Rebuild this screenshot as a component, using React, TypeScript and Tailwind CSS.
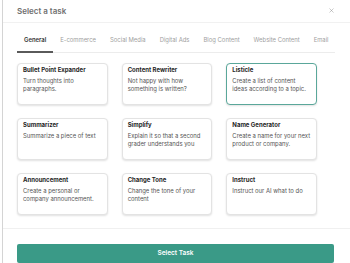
import { X } from 'lucide-react'

interface Task {
  title: string
  description: string
}

const tabs = [
  'General',
  'E-commerce',
  'Social Media',
  'Digital Ads',
  'Blog Content',
  'Website Content',
  'Email',
]

// descriptions keep the line breaks the cards show
const tasks: Task[] = [
  { title: 'Bullet Point Expander', description: 'Turn thoughts into\nparagraphs.' },
  { title: 'Content Rewriter', description: 'Not happy with how\nsomething is written?' },
  { title: 'Listicle', description: 'Create a list of content\nideas according to a topic.' },
  { title: 'Summarizer', description: 'Summarize a piece of text' },
  { title: 'Simplify', description: 'Explain it so that a second\ngrader understands you' },
  { title: 'Name Generator', description: 'Create a name for your next\nproduct or company.' },
  { title: 'Announcement', description: 'Create a personal or\ncompany announcement.' },
  { title: 'Change Tone', description: 'Change the tone of your\ncontent' },
  { title: 'Instruct', description: 'Instruct our AI what to do' },
]

const TaskCard = ({ task, active }: { task: Task; active?: boolean }) => (
  <div
    className={`h-[42px] rounded-[4px] border bg-white px-[5px] pt-[2.5px] shadow-[0_1px_2px_rgba(0,0,0,0.12)] ${
      active ? 'border-[#5aa79a]' : 'border-[#e3e3e3]'
    }`}
  >
    <p className="text-[6px] font-bold leading-[8px] text-[#1f1f1f]">{task.title}</p>
    <p className="mt-[2.5px] whitespace-pre-line text-[5.9px] leading-[8px] text-[#555]">
      {task.description}
    </p>
  </div>
)

export default function App() {
  return (
    <div
      className="h-[263px] w-[350px] overflow-hidden bg-white"
      style={{ fontFamily: 'Inter, "Liberation Sans", sans-serif' }}
    >
      <div className="ml-[2px] flex h-full flex-col border-l border-[#d4d4d4]">
        {/* Header */}
        <div className="flex h-[25px] items-center justify-between border-b border-[#f1f1f1] pl-[14px] pr-[15px]">
          <h2 className="text-[8px] font-semibold text-[#6f6f6f]">Select a task</h2>
          <X size={7} strokeWidth={1.5} className="text-[#888]" />
        </div>

        {/* Tabs */}
        <div className="ml-[14px] mr-[15px] mt-[9px] flex border-b border-[#ececec]">
          {tabs.map((tab, i) => (
            <div
              key={tab}
              className={`-mb-px whitespace-nowrap px-[7px] pb-[7px] pt-[4px] text-[5.9px] leading-[8px] ${
                i === 0
                  ? 'border-b-[2px] border-[#5a5a5a] font-semibold text-[#333]'
                  : 'border-b-[2px] border-transparent text-[#a0a0a0]'
              }`}
            >
              {tab}
            </div>
          ))}
        </div>

        {/* Task grid */}
        <div className="ml-[14px] mt-[10px] grid w-[300px] grid-cols-3 gap-x-[14px] gap-y-[13px]">
          {tasks.map((task, i) => (
            <TaskCard key={task.title} task={task} active={i === 2} />
          ))}
        </div>

        {/* Footer */}
        <div className="mt-[13px] border-t border-[#f0f0f0] pl-[14px] pr-[16px] pt-[8px]">
          <button className="h-[19px] w-full rounded-[2px] bg-[#3a9a87] text-[6.5px] font-semibold text-white">
            Select Task
          </button>
        </div>
      </div>
    </div>
  )
}
